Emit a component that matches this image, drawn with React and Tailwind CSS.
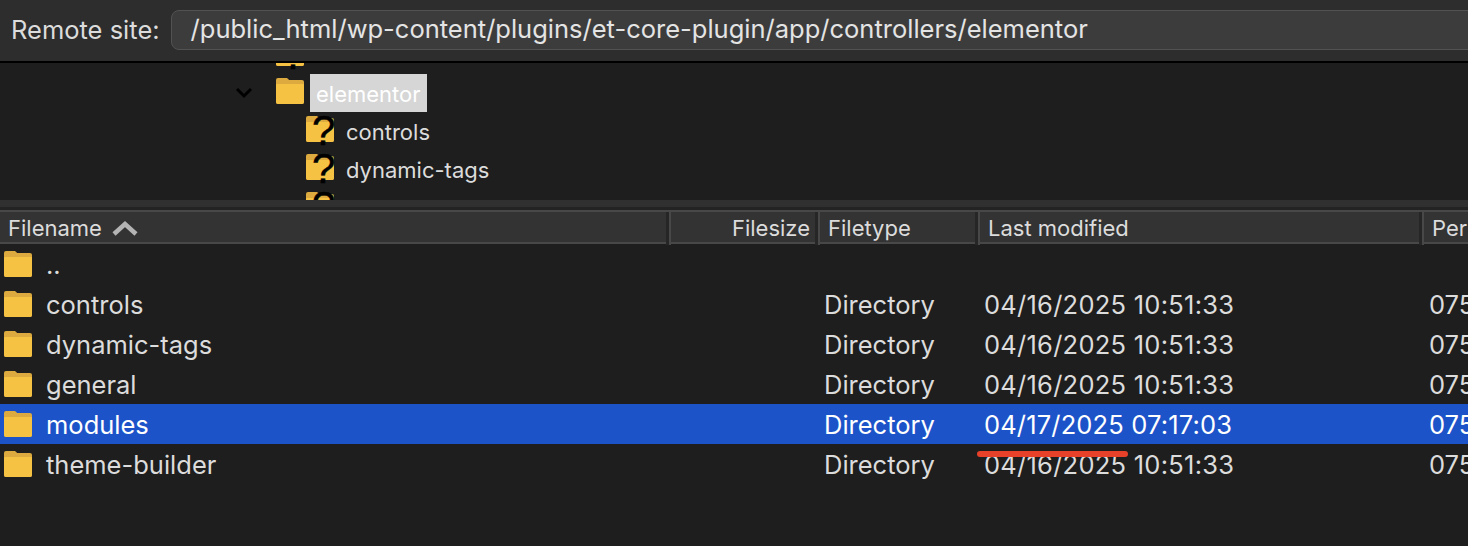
const Folder = ({ className = '' }) => (
  <svg viewBox="0 0 28 26" className={`w-7 h-[26px] shrink-0 ${className}`}>
    <path d="M0 2a2 2 0 0 1 2-2h8c1.200 0 2 .6 3 2h13a2 2 0 0 1 2 2v20a2 2 0 0 1-2 2H2a2 2 0 0 1-2-2z" fill="#dcaa3e" />
    <path d="M0 7a1 1 0 0 1 1-1h26a1 1 0 0 1 1 1v17a2 2 0 0 1-2 2H2a2 2 0 0 1-2-2z" fill="#f6c244" />
  </svg>
);

const UnknownFolder = () => (
  <div className="relative w-7 h-[26px] shrink-0 -mt-1">
    <Folder />
    <span className="absolute left-[6px] -top-[6px] font-['Liberation_Sans',sans-serif] text-[42px] leading-[42px] text-black [-webkit-text-stroke:0.5px_black]">?</span>
  </div>
);

const TreeRow = ({ indent, label }) => (
  <div className={`h-[38px] shrink-0 flex items-center gap-3 ${indent}`}>
    <UnknownFolder />
    <span className="pt-[2px] text-[22px] text-[#dcdcdc]">{label}</span>
  </div>
);

const files = [
  { name: '..', date: '' },
  { name: 'controls', type: 'Directory', date: '04/16/2025 10:51:33', perm: '0755' },
  { name: 'dynamic-tags', type: 'Directory', date: '04/16/2025 10:51:33', perm: '0755' },
  { name: 'general', type: 'Directory', date: '04/16/2025 10:51:33', perm: '0755' },
  { name: 'modules', type: 'Directory', date: '04/17/2025 07:17:03', perm: '0755', selected: true },
  { name: 'theme-builder', type: 'Directory', date: '04/16/2025 10:51:33', perm: '0755' },
];

const cols = 'grid grid-cols-[671px_149px_160px_444px_1fr]';

const HeaderCell = ({ children, className = '' }) => (
  <div className={`flex items-center px-2 border-r-2 border-[#484848] text-[22px] text-[#dcdcdc] shadow-[inset_-3px_0_0_#262626] ${className}`}>
    {children}
  </div>
);

export default function App() {
  return (
    <div className="w-[1468px] h-[546px] overflow-hidden bg-[#1e1e1e] font-['Inter',sans-serif] relative">
      {/* Remote site bar */}
      <div className="h-[61px] bg-[#2d2d2d] flex items-center pl-[11px] gap-[11px]">
        <span className="text-[25.5px] text-[#dcdcdc] whitespace-nowrap">Remote site:</span>
        <div className="flex-1 -mr-4 -mt-[2px] h-[40px] rounded-lg bg-[#3c3c3c] border border-[#525252] flex items-center pl-[19px] text-[25.5px] text-[#e4e4e4] whitespace-nowrap">
          /public_html/wp-content/plugins/et-core-plugin/app/controllers/elementor
        </div>
      </div>
      <div className="h-[2px] bg-black" />

      {/* Directory tree */}
      <div className="h-[137px] overflow-hidden flex flex-col">
        <div className="-mt-[27px] shrink-0">
          <TreeRow indent="pl-[276px]" label="" />
        </div>
        <div className="h-[38px] shrink-0 flex items-center pl-[234px]">
          <svg viewBox="0 0 20 14" className="w-5 h-[14px] shrink-0" fill="none" stroke="#000" strokeWidth="3">
            <path d="M3 3l7 7 7-7" />
          </svg>
          <Folder className="ml-[22px] -mt-1" />
          <span className="ml-[6px] h-[38px] px-[6px] pt-[2px] bg-[#d6d6d6] flex items-center text-[22px] text-white">elementor</span>
        </div>
        <TreeRow indent="pl-[306px]" label="controls" />
        <TreeRow indent="pl-[306px]" label="dynamic-tags" />
        <TreeRow indent="pl-[306px]" label="general" />
      </div>

      {/* Splitter */}
      <div className="h-[10px] bg-[#303030] border-b-[3px] border-[#232323]" />

      {/* List header */}
      <div className={`${cols} h-[34px] bg-[#333333] border-y-2 border-[#484848]`}>
        <HeaderCell>
          Filename
          <svg viewBox="0 0 26 16" className="w-[26px] h-4 ml-[10px] -mt-[2px]" fill="none" stroke="#b4b4b4" strokeWidth="4.500">
            <path d="M2 14L13 4l11 10" />
          </svg>
        </HeaderCell>
        <HeaderCell className="justify-end">Filesize</HeaderCell>
        <HeaderCell>Filetype</HeaderCell>
        <HeaderCell>Last modified</HeaderCell>
        <div className="flex items-center px-2 text-[22px] text-[#dcdcdc] whitespace-nowrap">Permissions</div>
      </div>

      {/* File rows */}
      {files.map((f) => (
        <div
          key={f.name}
          className={`${cols} h-10 items-center text-[25.5px] whitespace-nowrap ${f.selected ? 'bg-[#1c53c9] text-white' : 'text-[#dcdcdc]'}`}
        >
          <div className="flex items-center gap-[14px] pl-1">
            <Folder className="-mt-px" />
            <span className="pt-[2px]">{f.name}</span>
          </div>
          <div />
          <div className="pl-1 pt-[2px]">{f.type}</div>
          <div className={`pl-1 pt-[2px] ${f.selected ? 'tracking-[0.15px]' : 'tracking-[0.25px]'}`}>{f.date}</div>
          <div className="pl-[5px] pt-[2px]">{f.perm}</div>
        </div>
      ))}

      {/* Red annotation line */}
      <div className="absolute left-[977px] top-[451px] w-[151px] h-[6px] rounded-full bg-[#e8412a]" />
    </div>
  );
}
